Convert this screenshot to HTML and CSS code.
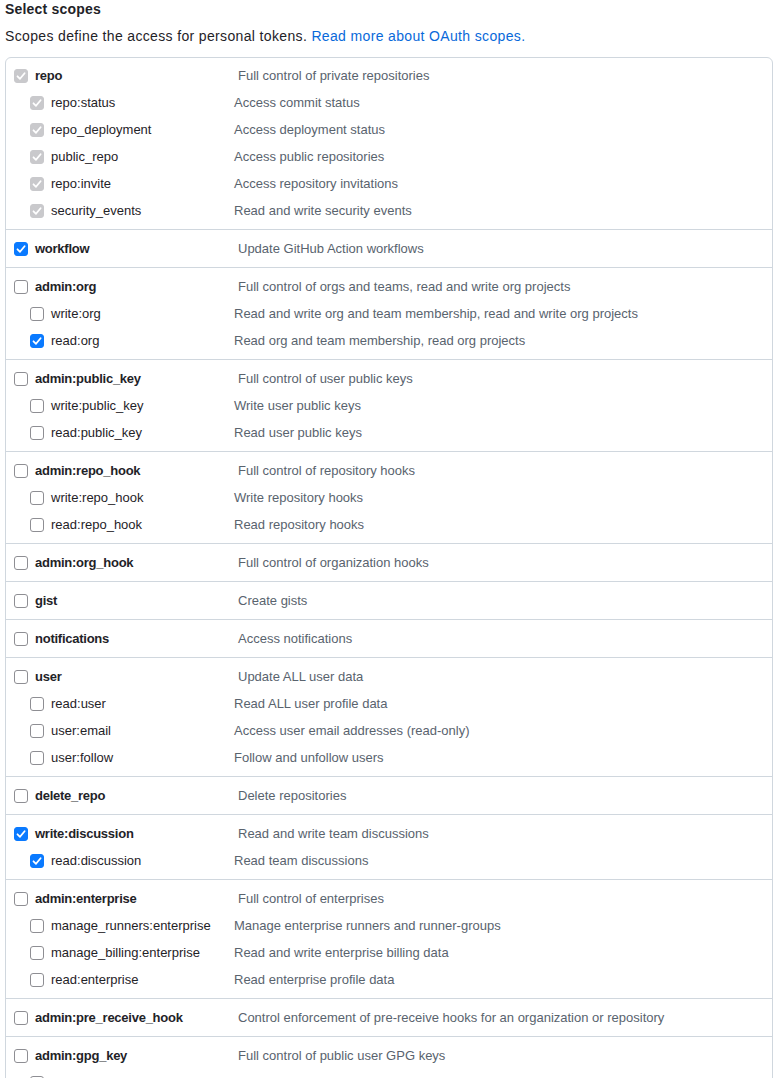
FILE: index.html
```html
<!DOCTYPE html>
<html lang="en">
<head>
<meta charset="utf-8">
<title>Select scopes</title>
<link rel="stylesheet" href="styles.css">
</head>
<body>
<div class="page">
  <h3 class="title">Select scopes</h3>
  <p class="lead">Scopes define the access for personal tokens. <a href="#" class="link">Read more about OAuth scopes.</a></p>

  <div class="scopes">
    <div class="group">
      <div class="scope parent"><label><span class="cb disabled"><svg viewBox="0 0 14 14"><path d="M3.5 7.3 L6 9.8 L10.6 4.2"/></svg></span>repo</label><span class="desc">Full control of private repositories</span></div>
      <div class="scope child"><label><span class="cb disabled"><svg viewBox="0 0 14 14"><path d="M3.5 7.3 L6 9.8 L10.6 4.2"/></svg></span>repo:status</label><span class="desc">Access commit status</span></div>
      <div class="scope child"><label><span class="cb disabled"><svg viewBox="0 0 14 14"><path d="M3.5 7.3 L6 9.8 L10.6 4.2"/></svg></span>repo_deployment</label><span class="desc">Access deployment status</span></div>
      <div class="scope child"><label><span class="cb disabled"><svg viewBox="0 0 14 14"><path d="M3.5 7.3 L6 9.8 L10.6 4.2"/></svg></span>public_repo</label><span class="desc">Access public repositories</span></div>
      <div class="scope child"><label><span class="cb disabled"><svg viewBox="0 0 14 14"><path d="M3.5 7.3 L6 9.8 L10.6 4.2"/></svg></span>repo:invite</label><span class="desc">Access repository invitations</span></div>
      <div class="scope child"><label><span class="cb disabled"><svg viewBox="0 0 14 14"><path d="M3.5 7.3 L6 9.8 L10.6 4.2"/></svg></span>security_events</label><span class="desc">Read and write security events</span></div>
    </div>

    <div class="group">
      <div class="scope parent"><label><span class="cb checked"><svg viewBox="0 0 14 14"><path d="M3.5 7.3 L6 9.8 L10.6 4.2"/></svg></span>workflow</label><span class="desc">Update GitHub Action workflows</span></div>
    </div>

    <div class="group">
      <div class="scope parent"><label><span class="cb"></span>admin:org</label><span class="desc">Full control of orgs and teams, read and write org projects</span></div>
      <div class="scope child"><label><span class="cb"></span>write:org</label><span class="desc">Read and write org and team membership, read and write org projects</span></div>
      <div class="scope child"><label><span class="cb checked"><svg viewBox="0 0 14 14"><path d="M3.5 7.3 L6 9.8 L10.6 4.2"/></svg></span>read:org</label><span class="desc">Read org and team membership, read org projects</span></div>
    </div>

    <div class="group">
      <div class="scope parent"><label><span class="cb"></span>admin:public_key</label><span class="desc">Full control of user public keys</span></div>
      <div class="scope child"><label><span class="cb"></span>write:public_key</label><span class="desc">Write user public keys</span></div>
      <div class="scope child"><label><span class="cb"></span>read:public_key</label><span class="desc">Read user public keys</span></div>
    </div>

    <div class="group">
      <div class="scope parent"><label><span class="cb"></span>admin:repo_hook</label><span class="desc">Full control of repository hooks</span></div>
      <div class="scope child"><label><span class="cb"></span>write:repo_hook</label><span class="desc">Write repository hooks</span></div>
      <div class="scope child"><label><span class="cb"></span>read:repo_hook</label><span class="desc">Read repository hooks</span></div>
    </div>

    <div class="group">
      <div class="scope parent"><label><span class="cb"></span>admin:org_hook</label><span class="desc">Full control of organization hooks</span></div>
    </div>

    <div class="group">
      <div class="scope parent"><label><span class="cb"></span>gist</label><span class="desc">Create gists</span></div>
    </div>

    <div class="group">
      <div class="scope parent"><label><span class="cb"></span>notifications</label><span class="desc">Access notifications</span></div>
    </div>

    <div class="group">
      <div class="scope parent"><label><span class="cb"></span>user</label><span class="desc">Update ALL user data</span></div>
      <div class="scope child"><label><span class="cb"></span>read:user</label><span class="desc">Read ALL user profile data</span></div>
      <div class="scope child"><label><span class="cb"></span>user:email</label><span class="desc">Access user email addresses (read-only)</span></div>
      <div class="scope child"><label><span class="cb"></span>user:follow</label><span class="desc">Follow and unfollow users</span></div>
    </div>

    <div class="group">
      <div class="scope parent"><label><span class="cb"></span>delete_repo</label><span class="desc">Delete repositories</span></div>
    </div>

    <div class="group">
      <div class="scope parent"><label><span class="cb checked"><svg viewBox="0 0 14 14"><path d="M3.5 7.3 L6 9.8 L10.6 4.2"/></svg></span>write:discussion</label><span class="desc">Read and write team discussions</span></div>
      <div class="scope child"><label><span class="cb checked"><svg viewBox="0 0 14 14"><path d="M3.5 7.3 L6 9.8 L10.6 4.2"/></svg></span>read:discussion</label><span class="desc">Read team discussions</span></div>
    </div>

    <div class="group">
      <div class="scope parent"><label><span class="cb"></span>admin:enterprise</label><span class="desc">Full control of enterprises</span></div>
      <div class="scope child"><label><span class="cb"></span>manage_runners:enterprise</label><span class="desc">Manage enterprise runners and runner-groups</span></div>
      <div class="scope child"><label><span class="cb"></span>manage_billing:enterprise</label><span class="desc">Read and write enterprise billing data</span></div>
      <div class="scope child"><label><span class="cb"></span>read:enterprise</label><span class="desc">Read enterprise profile data</span></div>
    </div>

    <div class="group">
      <div class="scope parent"><label><span class="cb"></span>admin:pre_receive_hook</label><span class="desc">Control enforcement of pre-receive hooks for an organization or repository</span></div>
    </div>

    <div class="group">
      <div class="scope parent"><label><span class="cb"></span>admin:gpg_key</label><span class="desc">Full control of public user GPG keys</span></div>
      <div class="scope child"><label><span class="cb"></span>write:gpg_key</label><span class="desc">Write public user GPG keys</span></div>
    </div>
  </div>
</div>
</body>
</html>
```

FILE: styles.css
```css
html, body {
  margin: 0;
  padding: 0;
  background: #ffffff;
}

body {
  font-family: "Liberation Sans", Arial, sans-serif;
  color: #1f2328;
}

.page {
  padding: 0 6px 0 5px;
}

.title {
  margin: 0;
  padding-top: 1px;
  font-size: 14px;
  line-height: 17px;
  font-weight: 700;
  letter-spacing: 0.2px;
  color: #1f2328;
}

.lead {
  margin: 10px 0 0;
  font-size: 14px;
  line-height: 17px;
  letter-spacing: 0.35px;
  color: #1f2328;
}

.link {
  color: #0969da;
  text-decoration: none;
}

.scopes {
  margin-top: 12px;
  border: 1px solid #d0d7de;
  border-radius: 6px;
}

.group {
  padding: 4px 0 6px;
  border-top: 1px solid #d0d7de;
}

.group:first-child {
  padding-top: 3px;
  border-top: none;
}

.scope {
  display: grid;
  align-items: center;
  box-sizing: border-box;
  height: 27px;
  padding-top: 2px;
  font-size: 13px;
}

.scope.parent {
  grid-template-columns: 224px 1fr;
  padding-left: 8px;
}

.scope.child {
  grid-template-columns: 204px 1fr;
  padding-left: 24px;
}

.scope label {
  display: flex;
  align-items: center;
  gap: 7px;
  color: #1f2328;
  white-space: nowrap;
}

.scope.parent label {
  font-weight: 700;
  letter-spacing: -0.25px;
}

.desc {
  color: #59636e;
  white-space: nowrap;
}

.cb {
  flex: none;
  box-sizing: border-box;
  width: 14px;
  height: 14px;
  border: 1px solid #8e8e93;
  border-radius: 3px;
  background: #ffffff;
  display: inline-flex;
}

.cb svg {
  width: 14px;
  height: 14px;
  margin: -1px;
}

.cb svg path {
  fill: none;
  stroke: #ffffff;
  stroke-width: 1.8;
  stroke-linecap: round;
  stroke-linejoin: round;
}

.cb.checked {
  background: #0a7aff;
  border-color: #0a7aff;
}

.cb.disabled {
  background: #c9c9cc;
  border-color: #c9c9cc;
}
```
